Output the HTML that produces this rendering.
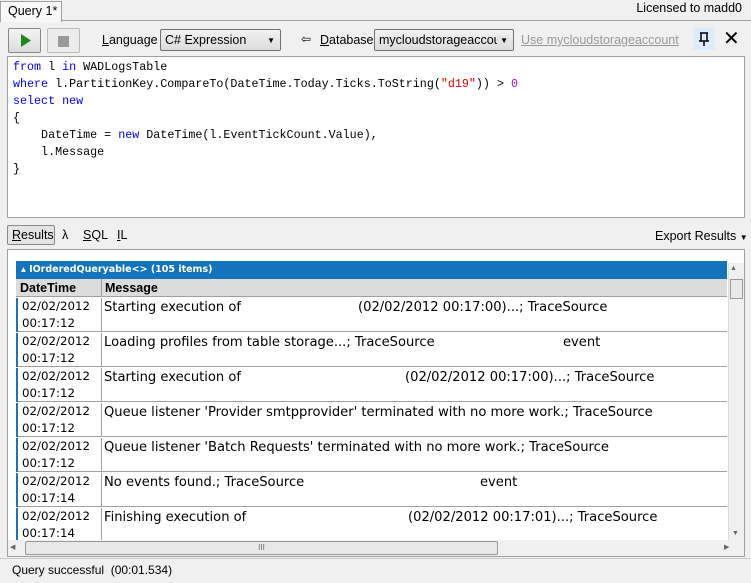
<!DOCTYPE html>
<html><head><style>
*{margin:0;padding:0;box-sizing:border-box}
body{width:751px;height:583px;background:#f0f0f0;font-family:"Liberation Sans",sans-serif;font-size:12px;color:#000;position:relative;overflow:hidden}
.a{position:absolute;white-space:nowrap}
.code{font-family:"Liberation Mono",monospace;font-size:11.7px;line-height:17px}
.kw{color:#0000ff}.st{color:#e00000}.nm{color:#c000c0}
.row{position:absolute;left:16px;width:711px;height:35px;border-bottom:1px solid #a0a0a0;background:#fff;font-family:"DejaVu Sans",sans-serif;font-size:11.8px;line-height:17px}
.row .d{position:absolute;left:0;top:1px;width:86px;height:34px;border-right:1px solid #a0a0a0;padding-left:4px;border-left:2px solid #1c73b9}
.row span{position:absolute;top:2px;font-size:13.1px;line-height:17px}
.dd{position:absolute;right:5px;top:6px;font-size:8px}
</style></head><body>
<div class="a" style="left:0;top:0;width:751px;height:21px;border-bottom:1px solid #a0a0a0"></div>
<div class="a" style="left:0;top:1px;width:62px;height:21px;background:#f8f8f8;border:1px solid #a0a0a0;border-bottom:none;padding:2px 0 0 7px;font-size:12.5px">Query 1*</div>
<div class="a" style="right:9px;top:1px;font-size:12.5px">Licensed to madd0</div>
<div class="a" style="left:8px;top:28px;width:33px;height:25px;border:1px solid #888;border-radius:2px;background:linear-gradient(#f4f4f4,#dcdcdc)"><svg width="31" height="23"><path d="M12 5 L22 11.5 L12 18Z" fill="#1a8a1a"/></svg></div>
<div class="a" style="left:47px;top:28px;width:33px;height:25px;border:1px solid #bbb;border-radius:2px;background:#ececec"><div style="position:absolute;left:10px;top:7px;width:11px;height:11px;background:#999"></div></div>
<div class="a" style="left:102px;top:33px;font-size:12.5px"><u>L</u>anguage</div>
<div class="a" style="left:160px;top:29px;width:121px;height:22px;border:1px solid #707070;border-radius:2px;background:linear-gradient(#f2f2f2,#dcdcdc);padding:3px 4px;font-size:12.5px">C# Expression<span class="dd">▼</span></div>
<div class="a" style="left:301px;top:32px;font-size:12px">⇦</div>
<div class="a" style="left:320px;top:33px;font-size:12.5px"><u>D</u>atabase</div>
<div class="a" style="left:374px;top:29px;width:140px;height:22px;border:1px solid #707070;border-radius:2px;background:linear-gradient(#f2f2f2,#dcdcdc);padding:3px 4px;font-size:12.5px;overflow:hidden">mycloudstorageaccou<span class="dd" style="background:#e2e2e2;padding-left:3px">▼</span></div>
<div class="a" style="left:521px;top:33px;font-size:12.5px;color:#999;text-decoration:underline">Use mycloudstorageaccount</div>
<div class="a" style="left:693px;top:28px;width:22px;height:22px;background:#dcebfb"><svg width="22" height="22"><path d="M7 5h8M8 5v8M14 5v8M6 13h10M11 13v5" stroke="#000" stroke-width="1.5" fill="none"/></svg></div>
<div class="a" style="left:723px;top:29px;font-size:20px;line-height:20px">✕</div>
<div class="a code" style="left:7px;top:56px;width:738px;height:162px;background:#fff;border:1px solid #a0a0a0;padding:2px 0 0 5px">
<div><span class="kw">from</span> l <span class="kw">in</span> WADLogsTable</div>
<div><span class="kw">where</span> l.PartitionKey.CompareTo(DateTime.Today.Ticks.ToString(<span class="st">"d19"</span>)) &gt; <span class="nm">0</span></div>
<div><span class="kw">select new</span></div>
<div>{</div>
<div>&nbsp;&nbsp;&nbsp;&nbsp;DateTime = <span class="kw">new</span> DateTime(l.EventTickCount.Value),</div>
<div>&nbsp;&nbsp;&nbsp;&nbsp;l.Message</div>
<div>}</div>
</div>
<div class="a" style="left:7px;top:225px;width:48px;height:20px;border:1px solid #888;border-radius:2px;background:#e4e4e4;padding:2px 0 0 4px;font-size:12.5px"><u>R</u>esults</div>
<div class="a" style="left:62px;top:228px;font-size:12.5px">λ</div>
<div class="a" style="left:83px;top:228px;font-size:12.5px"><u>S</u>QL</div>
<div class="a" style="left:117px;top:228px;font-size:12.5px"><u>I</u>L</div>
<div class="a" style="left:655px;top:229px;font-size:12.5px">Export Results <span style="font-size:8px">▼</span></div>
<div class="a" style="left:7px;top:249px;width:738px;height:308px;background:#fff;border:1px solid #a0a0a0"></div>
<div class="a" style="left:16px;top:261px;width:711px;height:18px;background:#1474bb;color:#fff;font-weight:bold;font-family:'DejaVu Sans',sans-serif;font-size:9.5px;padding:3px 0 0 5px">▴ IOrderedQueryable&lt;&gt; (105 items)</div>
<div class="a" style="left:16px;top:279px;width:711px;height:18px;background:#dcdcdc;border-bottom:1px solid #a0a0a0;font-weight:bold;font-size:12.5px"><span style="position:absolute;left:4px;top:2px">DateTime</span><span style="position:absolute;left:85px;top:0;height:18px;border-left:1px solid #a0a0a0;padding:2px 0 0 3px">Message</span></div>
<div class="row" style="top:297px"><div class="d">02/02/2012<br>00:17:12</div><span style="left:88px">Starting execution of</span><span style="left:342px">(02/02/2012 00:17:00)...; TraceSource</span></div>
<div class="row" style="top:332px"><div class="d">02/02/2012<br>00:17:12</div><span style="left:88px">Loading profiles from table storage...; TraceSource</span><span style="left:547px">event</span></div>
<div class="row" style="top:367px"><div class="d">02/02/2012<br>00:17:12</div><span style="left:88px">Starting execution of</span><span style="left:389px">(02/02/2012 00:17:00)...; TraceSource</span></div>
<div class="row" style="top:402px"><div class="d">02/02/2012<br>00:17:12</div><span style="left:88px">Queue listener 'Provider smtpprovider' terminated with no more work.; TraceSource</span></div>
<div class="row" style="top:437px"><div class="d">02/02/2012<br>00:17:12</div><span style="left:88px">Queue listener 'Batch Requests' terminated with no more work.; TraceSource</span></div>
<div class="row" style="top:472px"><div class="d">02/02/2012<br>00:17:14</div><span style="left:88px">No events found.; TraceSource</span><span style="left:464px">event</span></div>
<div class="row" style="top:507px;height:33px;border:none"><div class="d" style="height:33px">02/02/2012<br>00:17:14</div><span style="left:88px">Finishing execution of</span><span style="left:392px">(02/02/2012 00:17:01)...; TraceSource</span></div>
<div class="a" style="left:728px;top:263px;width:16px;height:277px;background:#f0f0f0;border-left:1px solid #ddd"><div style="position:absolute;left:1px;top:2px;font-size:7px;color:#666">▲</div><div style="position:absolute;left:1px;top:16px;width:13px;height:20px;border:1px solid #999;background:#eaeaea"></div><div style="position:absolute;left:3px;bottom:3px;font-size:7px;color:#666">▼</div></div>
<div class="a" style="left:8px;top:540px;width:736px;height:16px;background:#f0f0f0"><div style="position:absolute;left:2px;top:3px;font-size:7px;color:#666">◀</div><div style="position:absolute;left:17px;top:1px;width:473px;height:14px;border:1px solid #999;border-radius:2px;background:#e8e8e8;text-align:center;font-size:8px;color:#666;line-height:12px">III</div><div style="position:absolute;left:716px;top:3px;font-size:7px;color:#666">▶</div></div>
<div class="a" style="left:0;top:558px;width:751px;height:25px;border-top:1px solid #ccc"></div>
<div class="a" style="left:12px;top:563px;font-size:12px">Query successful&nbsp; (00:01.534)</div>
</body></html>
